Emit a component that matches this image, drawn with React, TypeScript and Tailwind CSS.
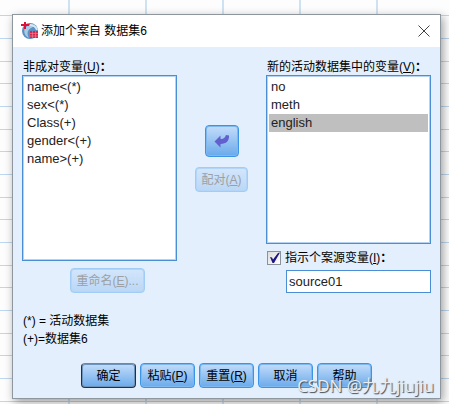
import { useState } from "react";
import type { ReactNode } from "react";

type ListProps = {
  label: string;
  accessKey: string;
  items: string[];
  selected: string | null;
  onSelect: (item: string) => void;
  id: string;
  height: string;
};

function Mnemonic({ letter }: { letter: string }) {
  return (
    <span>
      (<span className="underline">{letter}</span>)
    </span>
  );
}

function VariableList({ label, accessKey, items, selected, onSelect, id, height }: ListProps) {
  return (
    <div>
      <div id={id} className="h-[18px] pl-px text-[12px] leading-[20px] whitespace-nowrap text-black">
        {label}
        <Mnemonic letter={accessKey} />
        <b>：</b>
      </div>
      <ul
        role="listbox"
        aria-labelledby={id}
        className={`${height} border border-[#4a8fd6] bg-white p-[2px] outline outline-[#b5d3f1] -outline-offset-2`}
      >
        {items.map((item) => (
          <li
            key={item}
            role="option"
            aria-selected={item === selected}
            onClick={() => onSelect(item)}
            className={`h-[18px] px-[2px] text-[13px] leading-[18px] ${
              item === selected ? "bg-[#bfbfbf]" : ""
            }`}
          >
            {item}
          </li>
        ))}
      </ul>
    </div>
  );
}

function DialogButton({
  children,
  width = "w-[55px]",
  primary = false,
  disabled = false,
}: {
  children: ReactNode;
  width?: string;
  primary?: boolean;
  disabled?: boolean;
}) {
  const tone = disabled
    ? "border-[#a0ccf5] from-[#d3e6fb] to-[#bad7f6] text-[#9c9fa3] inset-ring-[#b3d5f7]"
    : primary
      ? "border-[#22303f] border-t-[#788595] from-[#c3dcfa] to-[#69aaea] text-black inset-ring-[#6f94bb]"
      : "border-[#3b94e6] from-[#c3dcfa] to-[#69aaea] text-black inset-ring-[#7db8f0]";
  return (
    <button
      type="button"
      disabled={disabled}
      className={`${width} ${tone} h-[25px] rounded-[4px] border bg-linear-to-b text-center text-[12px] leading-[24px] whitespace-nowrap inset-ring`}
    >
      {children}
    </button>
  );
}

function AppLogo() {
  return (
    <svg viewBox="0 0 18 18" className="size-[18px]" aria-hidden="true">
      <circle cx="9" cy="9" r="8" fill="#5b91c2" />
      <path d="M4 6a8 8 0 0 1 12-1c-4-1-7 1-9 4-1 3 0 5 1 7-4-2-6-6-4-10Z" fill="#a9cbe5" />
      <path d="M9 3c4 0 6 2 7 5" stroke="#d6e7f3" strokeWidth="2" fill="none" />
      <path d="M0 2h3V0h2v2h3v2H5v3H3V4H0Z" fill="#d9143a" />
      <path d="M9 9h8v7H9Z" fill="#d5284b" />
      <path d="M9 11.5h8M9 14h8M11.5 9v7M14.5 9v7" stroke="#e58a9d" strokeWidth=".6" />
    </svg>
  );
}

export default function App() {
  const [left, setLeft] = useState<string | null>(null);
  const [right, setRight] = useState<string | null>("english");
  const [indicate, setIndicate] = useState(true);
  const [source, setSource] = useState("source01");

  return (
    <main className="min-h-screen bg-[#fdfdfd] bg-[linear-gradient(transparent_15px,#bdd7ee_15px,#bdd7ee_16px,transparent_16px,transparent_38px,#bdd7ee_38px,#bdd7ee_39px,transparent_39px,transparent_61px,#bdd7ee_61px,#bdd7ee_62px,transparent_62px),linear-gradient(to_right,transparent_68px,#cfe2f3_68px,#cfe2f3_70px,transparent_70px)] bg-[size:77px_68px] pt-[14px] pr-[8px] pb-[5px] pl-[12px] font-['Liberation_Sans','Noto_Sans_CJK_SC',sans-serif] text-[#222]">
      <section
        role="dialog"
        aria-labelledby="dialog-title"
        className="relative border border-[#8f979e] bg-[#e3effc] shadow-[2px_3px_9px_rgba(0,0,0,0.38)]"
      >
        <header className="flex h-[32px] items-center bg-white pr-[10px] pl-[8px]">
          <AppLogo />
          <h1 id="dialog-title" className="ml-[2px] flex-1 text-[12px] leading-[18px] text-black">
            添加个案自 数据集6
          </h1>
          <button type="button" aria-label="关闭" className="text-[#444]">
            <svg viewBox="0 0 12 12" className="size-[12px]" fill="none" stroke="currentColor">
              <path d="m.5.5 11 11m0-11-11 11" />
            </svg>
          </button>
        </header>

        <div className="px-[9px] pt-[10px] pb-[10px]">
          <div className="flex">
            <div className="w-[155px] shrink-0">
              <VariableList
                id="unpaired-label"
                label="非成对变量"
                accessKey="U"
                items={["name<(*)", "sex<(*)", "Class(+)", "gender<(+)", "name>(+)"]}
                selected={left}
                onSelect={setLeft}
                height="h-[186px]"
              />
              <div className="mt-[7px] pl-[48px]">
                <DialogButton width="w-[75px]" disabled>
                  重命名
                  <Mnemonic letter="E" />
                  ...
                </DialogButton>
              </div>
            </div>

            <div className="flex flex-1 flex-col items-center gap-[10px] pt-[68px]">
              <button
                type="button"
                aria-label="移动变量"
                className="flex h-[32px] w-[34px] items-center justify-center rounded-[4px] border border-[#3b94e6] bg-linear-to-b from-[#c3dcfa] to-[#69aaea] inset-ring inset-ring-[#7db8f0]"
              >
                <svg viewBox="0 0 16 14" className="h-[14px] w-[16px]" aria-hidden="true">
                  <path
                    d="M.5 7.500 6.500 1.500v3.500c2.800.3 4.500-1 5.500-4l3 .5c.3 5.500-2.500 8.300-8.500 8.500v3.500Z"
                    fill="#6260cf"
                  />
                </svg>
              </button>
              <DialogButton disabled width="w-[53px]">
                配对
                <Mnemonic letter="A" />
              </DialogButton>
            </div>

            <div className="w-[165px] shrink-0">
              <VariableList
                id="active-label"
                label="新的活动数据集中的变量"
                accessKey="V"
                items={["no", "meth", "english"]}
                selected={right}
                onSelect={setRight}
                height="h-[169px]"
              />
              <label className="mt-[5px] flex h-[18px] items-center text-[12px] leading-[18px] text-black">
                <span className="relative mr-[4px] ml-px flex size-[14px]">
                  <input
                    type="checkbox"
                    checked={indicate}
                    onChange={(e) => setIndicate(e.target.checked)}
                    className="size-[14px] appearance-none border border-[#8a929a] bg-linear-to-br from-[#dcdcdc] to-white"
                  />
                  {indicate && (
                    <svg
                      viewBox="0 0 14 14"
                      className="pointer-events-none absolute inset-0 size-[14px]"
                      aria-hidden="true"
                    >
                      <path d="M3 6 5 6.500 6 8.500 11 2l2-.5L7 12H5.500Z" fill="#1c1686" />
                    </svg>
                  )}
                </span>
                指示个案源变量
                <Mnemonic letter="I" />
                <b>：</b>
              </label>
              <input
                type="text"
                aria-label="源变量名称"
                value={source}
                onChange={(e) => setSource(e.target.value)}
                className="mt-[3px] ml-[20px] block h-[23px] w-[145px] border border-[#4a8fd6] bg-white px-[2px] text-[13px] leading-[18px] outline-none"
              />
            </div>
          </div>

          <div className="mt-[19px] px-px text-[12px] leading-[18px] text-black">
            <p>(*) = 活动数据集</p>
            <p>(+)=数据集6</p>
          </div>

          <footer className="mt-[15px] flex justify-center gap-[4px]">
            <DialogButton primary>确定</DialogButton>
            <DialogButton>
              粘贴
              <Mnemonic letter="P" />
            </DialogButton>
            <DialogButton>
              重置
              <Mnemonic letter="R" />
            </DialogButton>
            <DialogButton>取消</DialogButton>
            <DialogButton>帮助</DialogButton>
          </footer>
        </div>

        <p className="pointer-events-none absolute right-[6px] bottom-px font-['Open_Sans','Noto_Sans_CJK_SC',sans-serif] text-[17px] leading-[22px] whitespace-nowrap text-[#e9edf1] [text-shadow:1px_1px_1px_#3f464e]">
          CSDN @九九jiujiu
        </p>
      </section>
    </main>
  );
}
